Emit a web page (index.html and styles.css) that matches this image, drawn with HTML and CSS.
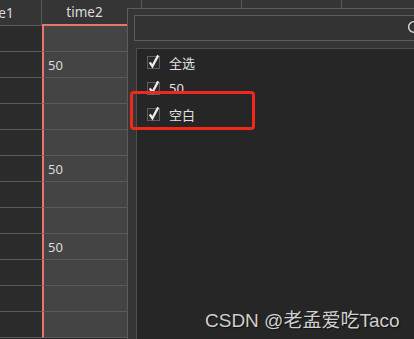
FILE: index.html
```html
<!DOCTYPE html>
<html>
<head>
<meta charset="utf-8">
<link rel="stylesheet" href="styles.css">
</head>
<body>
<div class="screen">
  <div class="table">
    <div class="row head">
      <div class="cell c1">time1</div>
      <div class="cell c2">time2</div>
      <div class="cell c3"></div>
      <div class="cell c3"></div>
      <div class="cell c3"></div>
    </div>
    <div class="row"><div class="cell c1"></div><div class="cell c2"></div></div>
    <div class="row"><div class="cell c1"></div><div class="cell c2">50</div></div>
    <div class="row"><div class="cell c1"></div><div class="cell c2"></div></div>
    <div class="row"><div class="cell c1"></div><div class="cell c2"></div></div>
    <div class="row"><div class="cell c1"></div><div class="cell c2"></div></div>
    <div class="row"><div class="cell c1"></div><div class="cell c2">50</div></div>
    <div class="row"><div class="cell c1"></div><div class="cell c2"></div></div>
    <div class="row"><div class="cell c1"></div><div class="cell c2"></div></div>
    <div class="row"><div class="cell c1"></div><div class="cell c2">50</div></div>
    <div class="row"><div class="cell c1"></div><div class="cell c2"></div></div>
    <div class="row"><div class="cell c1"></div><div class="cell c2"></div></div>
    <div class="row"><div class="cell c1"></div><div class="cell c2"></div></div>
  </div>

  <div class="popup">
    <div class="search">
      <svg class="search-icon" width="16" height="16" viewBox="0 0 16 16"><circle cx="7" cy="7" r="5.4" fill="none" stroke="#e0e0e0" stroke-width="1.4"/><line x1="11" y1="11" x2="15" y2="15" stroke="#e0e0e0" stroke-width="1.4"/></svg>
    </div>
    <div class="list">
      <div class="item"><span class="check"><svg width="13" height="13" viewBox="0 0 13 13"><path d="M2.8 6.4 L5.4 10.2 L11.2 -0.6" fill="none" stroke="#ececec" stroke-width="2.3"/></svg></span><span class="label">全选</span></div>
      <div class="item"><span class="check"><svg width="13" height="13" viewBox="0 0 13 13"><path d="M2.8 6.4 L5.4 10.2 L11.2 -0.6" fill="none" stroke="#ececec" stroke-width="2.3"/></svg></span><span class="label">50</span></div>
      <div class="item"><span class="check"><svg width="13" height="13" viewBox="0 0 13 13"><path d="M2.8 6.4 L5.4 10.2 L11.2 -0.6" fill="none" stroke="#ececec" stroke-width="2.3"/></svg></span><span class="label">空白</span></div>
    </div>
  </div>

  <div class="highlight"></div>
  <div class="watermark">CSDN @老孟爱吃Taco</div>
</div>
</body>
</html>
```

FILE: styles.css
```css
html, body {
  margin: 0;
  padding: 0;
  background: #262626;
}
.screen {
  position: relative;
  width: 414px;
  height: 339px;
  overflow: hidden;
  font-family: "Noto Sans", "Noto Sans CJK SC", sans-serif;
  font-size: 13px;
  color: #dcdcdc;
}
.table {
  margin-left: -50px;
  display: flex;
  flex-direction: column;
}
.row {
  display: flex;
  height: 26px;
}
.cell {
  flex: none;
  box-sizing: border-box;
  height: 26px;
  border-bottom: 1px solid #5a5a5a;
  display: flex;
  align-items: center;
}
.c1 {
  width: 92px;
  background: #2b2b2b;
}
.c2 {
  width: 100px;
  background: #444444;
  border-left: 2px solid #e8766c;
  padding-left: 4px;
}
.head .cell {
  background: #353535;
  justify-content: center;
  border-bottom: 1px solid #5a5a5a;
  font-size: 13.5px;
}
.head .c1 {
  border-right: 1px solid #5a5a5a;
}
.head .c2 {
  border-left: none;
  padding-left: 0;
  padding-right: 14px;
  border-bottom: 2px solid #e8766c;
  border-right: 1px solid #5a5a5a;
}
.c3 {
  width: 100px;
}
.head .c3 {
  border-right: 1px solid #5a5a5a;
}
.popup {
  position: absolute;
  left: 127px;
  top: 8px;
  width: 320px;
  height: 360px;
  box-sizing: border-box;
  background: #353535;
  border: 1px solid #5c5c5c;
  padding: 6px 0 0 6px;
  display: flex;
  flex-direction: column;
  gap: 7px;
}
.search {
  height: 26px;
  box-sizing: border-box;
  border: 1px solid #5c5c5c;
  background: #333333;
  display: flex;
  align-items: center;
  padding-left: 272px;
}
.search-icon {
  flex: none;
}
.list {
  flex: 1;
  margin-left: 2px;
  border: 1px solid #4e4e4e;
  background: #262626;
  padding: 0 0 0 10px;
  display: flex;
  flex-direction: column;
}
.item {
  height: 26px;
  display: flex;
  align-items: center;
  gap: 9px;
}
.check {
  width: 13px;
  height: 13px;
  box-sizing: border-box;
  border: 1px solid #5e5e5e;
  background: #2a2a2a;
  display: flex;
  align-items: center;
  justify-content: center;
}
.check svg {
  flex: none;
  overflow: visible;
}
.label {
  color: #e0e0e0;
  font-size: 13px;
}
.highlight {
  position: absolute;
  left: 130px;
  top: 91px;
  width: 125px;
  height: 39px;
  box-sizing: border-box;
  border: 3px solid #f2281c;
  border-radius: 4px;
}
.watermark {
  position: absolute;
  left: 205px;
  top: 305px;
  font-family: "Liberation Sans", "Noto Sans CJK SC", sans-serif;
  font-size: 19px;
  color: #cfcfcf;
  text-shadow: 1px 1px 1px #111;
  white-space: nowrap;
}
```
